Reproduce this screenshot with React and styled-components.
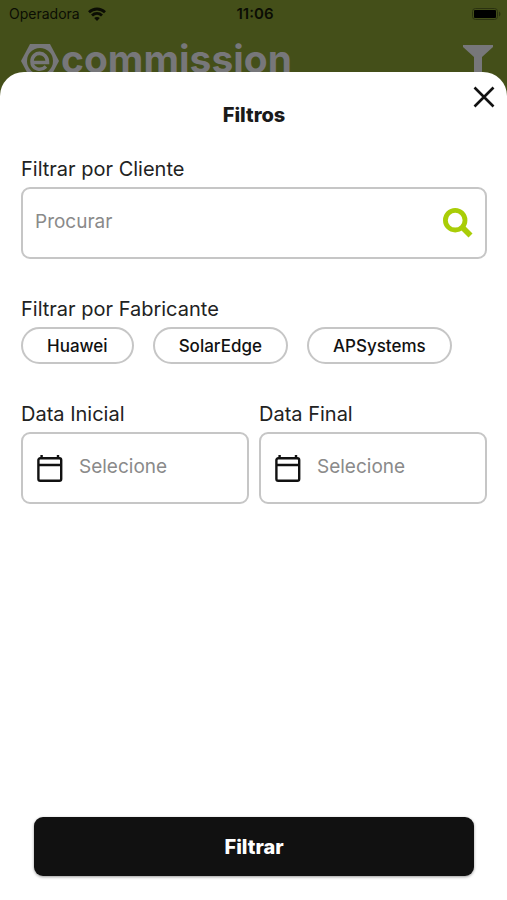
import React, { useState } from 'react';
import styled, { createGlobalStyle } from 'styled-components';

const GlobalStyle = createGlobalStyle`
  * {
    box-sizing: border-box;
  }

  body {
    margin: 0;
    background: #444f19;
    font-family: Inter, 'Liberation Sans', sans-serif;
  }

  button,
  input {
    font-family: inherit;
  }
`;

const Screen = styled.div`
  display: flex;
  flex-direction: column;
  min-height: 100vh;
  background: #444f19;
`;

const Backdrop = styled.header`
  height: 72px;
`;

const StatusBar = styled.div`
  display: grid;
  grid-template-columns: 1fr auto 1fr;
  align-items: center;
  height: 28px;
  padding: 0 6px 0 9px;
  color: #0b0d04;
  font-size: 14px;
  line-height: 28px;
`;

const Carrier = styled.div`
  display: flex;
  align-items: center;
  gap: 8px;
`;

const Clock = styled.time`
  font-size: 15px;
  font-weight: 600;
`;

const Battery = styled.svg`
  justify-self: end;
`;

const TopBar = styled.div`
  display: flex;
  align-items: flex-start;
  justify-content: space-between;
  padding: 16px 14px 0 21px;
  color: #77777a;
`;

const Logo = styled.div`
  display: flex;
  align-items: flex-start;
  gap: 2px;
  font-size: 39px;
  font-weight: 700;
  line-height: 29px;
`;

const Sheet = styled.main`
  position: relative;
  display: flex;
  flex: 1;
  flex-direction: column;
  padding: 31px 20px 24px 21px;
  border-radius: 24px 24px 0 0;
  background: #ffffff;
`;

const CloseButton = styled.button`
  position: absolute;
  top: 12px;
  right: 10px;
  display: flex;
  padding: 0;
  border: none;
  background: transparent;
  cursor: pointer;
`;

const Title = styled.h1`
  margin: 0 0 30px;
  color: #1a1a1a;
  font-size: 20px;
  font-weight: 800;
  line-height: 24px;
  text-align: center;
`;

const Form = styled.form`
  display: flex;
  flex: 1;
  flex-direction: column;
  gap: 38px;
`;

const Field = styled.div`
  flex: 1;
  min-width: 0;
`;

const Group = styled.fieldset`
  min-width: 0;
  margin: 0;
  padding: 0;
  border: none;
`;

const Label = styled.label`
  display: block;
  margin-bottom: 6px;
  padding: 0;
  color: #222222;
  font-size: 20px;
  font-weight: 400;
  line-height: 24px;
`;

const InputBox = styled.div`
  display: flex;
  align-items: center;
  gap: 16px;
  height: 72px;
  padding: 0 12px;
  border: 2px solid #c6c6c6;
  border-radius: 9px;
`;

const Input = styled.input`
  flex: 1;
  width: 100%;
  min-width: 0;
  padding: 0 0 2px;
  border: none;
  outline: none;
  background: transparent;
  color: #1a1a1a;
  font-size: 19px;
  line-height: 24px;

  &::placeholder {
    color: #8a8a8a;
    opacity: 1;
  }
`;

const SearchButton = styled.button`
  display: flex;
  padding: 0;
  border: none;
  background: transparent;
  cursor: pointer;
`;

const Chips = styled.div`
  display: flex;
  flex-wrap: wrap;
  gap: 12px 19px;
`;

const Chip = styled.button`
  height: 37px;
  padding: 0 24px;
  border: 2px solid ${({ $selected }) => ($selected ? '#a9cd07' : '#c6c6c6')};
  border-radius: 19px;
  background: #ffffff;
  color: #111111;
  font-size: 17px;
  font-weight: 500;
  line-height: 24px;
  cursor: pointer;
`;

const Dates = styled.div`
  display: flex;
  gap: 10px;
`;

const SubmitButton = styled.button`
  height: 59px;
  margin: auto 13px 0;
  border: none;
  border-radius: 9px;
  background: #111111;
  box-shadow: 0 1px 3px rgba(0, 0, 0, 0.4);
  color: #ffffff;
  font-size: 20px;
  font-weight: 800;
  cursor: pointer;
`;

const manufacturers = ['Huawei', 'SolarEdge', 'APSystems'];

const WifiIcon = () => (
  <svg width="18" height="14" viewBox="0 0 18 14" fill="none" stroke="currentColor" strokeWidth="2.8" aria-hidden="true">
    <path d="M1 5.2C5.6.9 12.4.9 17 5.2" />
    <path d="M4 8.5c2.9-2.7 7.1-2.7 10 0" />
    <path d="M9 14 6.2 11.1c1.6-1.4 4-1.4 5.6 0z" fill="currentColor" stroke="none" />
  </svg>
);

const LogoMark = () => (
  <svg width="38" height="34" viewBox="0 0 38 34" fill="none" stroke="currentColor" aria-hidden="true">
    <path d="M9 0h20l9 17-9 17H9L0 17z" fill="currentColor" stroke="none" />
    <circle cx="19" cy="17" r="13" fill="#444f19" stroke="none" />
    <path d="M11 18.5h15.5c0-12-15.5-12-15.5-1 0 8 9 10 14 5" strokeWidth="3.6" />
  </svg>
);

const CalendarIcon = () => (
  <svg width="28" height="28" viewBox="0 0 28 28" fill="none" stroke="#111111" strokeWidth="2.4" aria-hidden="true">
    <rect x="3.4" y="4.3" width="22.8" height="22.4" rx="1.8" />
    <path d="M3.5 11h22.5M6.6 1v4M23 1v4" />
  </svg>
);

const DateField = ({ id, label }) => (
  <Field>
    <Label htmlFor={id}>{label}</Label>
    <InputBox>
      <CalendarIcon />
      <Input id={id} type="text" placeholder="Selecione" />
    </InputBox>
  </Field>
);

const App = () => {
  const [selected, setSelected] = useState([]);

  const toggleManufacturer = (name) => {
    setSelected((current) =>
      current.includes(name) ? current.filter((item) => item !== name) : [...current, name]
    );
  };

  return (
    <Screen>
      <GlobalStyle />
      <Backdrop>
        <StatusBar>
          <Carrier>
            Operadora
            <WifiIcon />
          </Carrier>
          <Clock>11:06</Clock>
          <Battery width="30" height="14" viewBox="0 0 30 14" aria-hidden="true">
            <rect x="1.5" y="1.5" width="25" height="11" rx="3" fill="none" stroke="#2b3210" />
            <rect x="3" y="3" width="22" height="8" rx="1" fill="#000000" />
            <path d="M28 4.5v5c2-1 2-4 0-5z" fill="#2b3210" />
          </Battery>
        </StatusBar>
        <TopBar>
          <Logo>
            <LogoMark />
            commission
          </Logo>
          <svg width="30" height="30" viewBox="0 0 30 30" aria-hidden="true">
            <path d="M0 1h30v2L19 13v17h-8V13L0 3z" fill="currentColor" />
          </svg>
        </TopBar>
      </Backdrop>
      <Sheet>
        <CloseButton type="button" aria-label="Fechar">
          <svg width="26" height="26" viewBox="0 0 26 26" fill="none" stroke="#111111" strokeWidth="2.6">
            <path d="m3.5 3.5 19 19M22.5 3.5l-19 19" />
          </svg>
        </CloseButton>
        <Title>Filtros</Title>
        <Form onSubmit={(event) => event.preventDefault()}>
          <div>
            <Label htmlFor="client">Filtrar por Cliente</Label>
            <InputBox>
              <Input id="client" type="text" placeholder="Procurar" />
              <SearchButton type="button" aria-label="Procurar cliente">
                <svg width="30" height="30" viewBox="0 0 30 30" fill="none" stroke="#a9cd07">
                  <circle cx="12.2" cy="12.2" r="9.8" strokeWidth="4.8" />
                  <path d="m19.5 19.5 8 8" strokeWidth="5.6" />
                </svg>
              </SearchButton>
            </InputBox>
          </div>
          <Group>
            <Label as="legend">Filtrar por Fabricante</Label>
            <Chips>
              {manufacturers.map((name) => (
                <Chip
                  key={name}
                  type="button"
                  $selected={selected.includes(name)}
                  aria-pressed={selected.includes(name)}
                  onClick={() => toggleManufacturer(name)}
                >
                  {name}
                </Chip>
              ))}
            </Chips>
          </Group>
          <Dates>
            <DateField id="start-date" label="Data Inicial" />
            <DateField id="end-date" label="Data Final" />
          </Dates>
          <SubmitButton type="submit">Filtrar</SubmitButton>
        </Form>
      </Sheet>
    </Screen>
  );
};

export default App;
